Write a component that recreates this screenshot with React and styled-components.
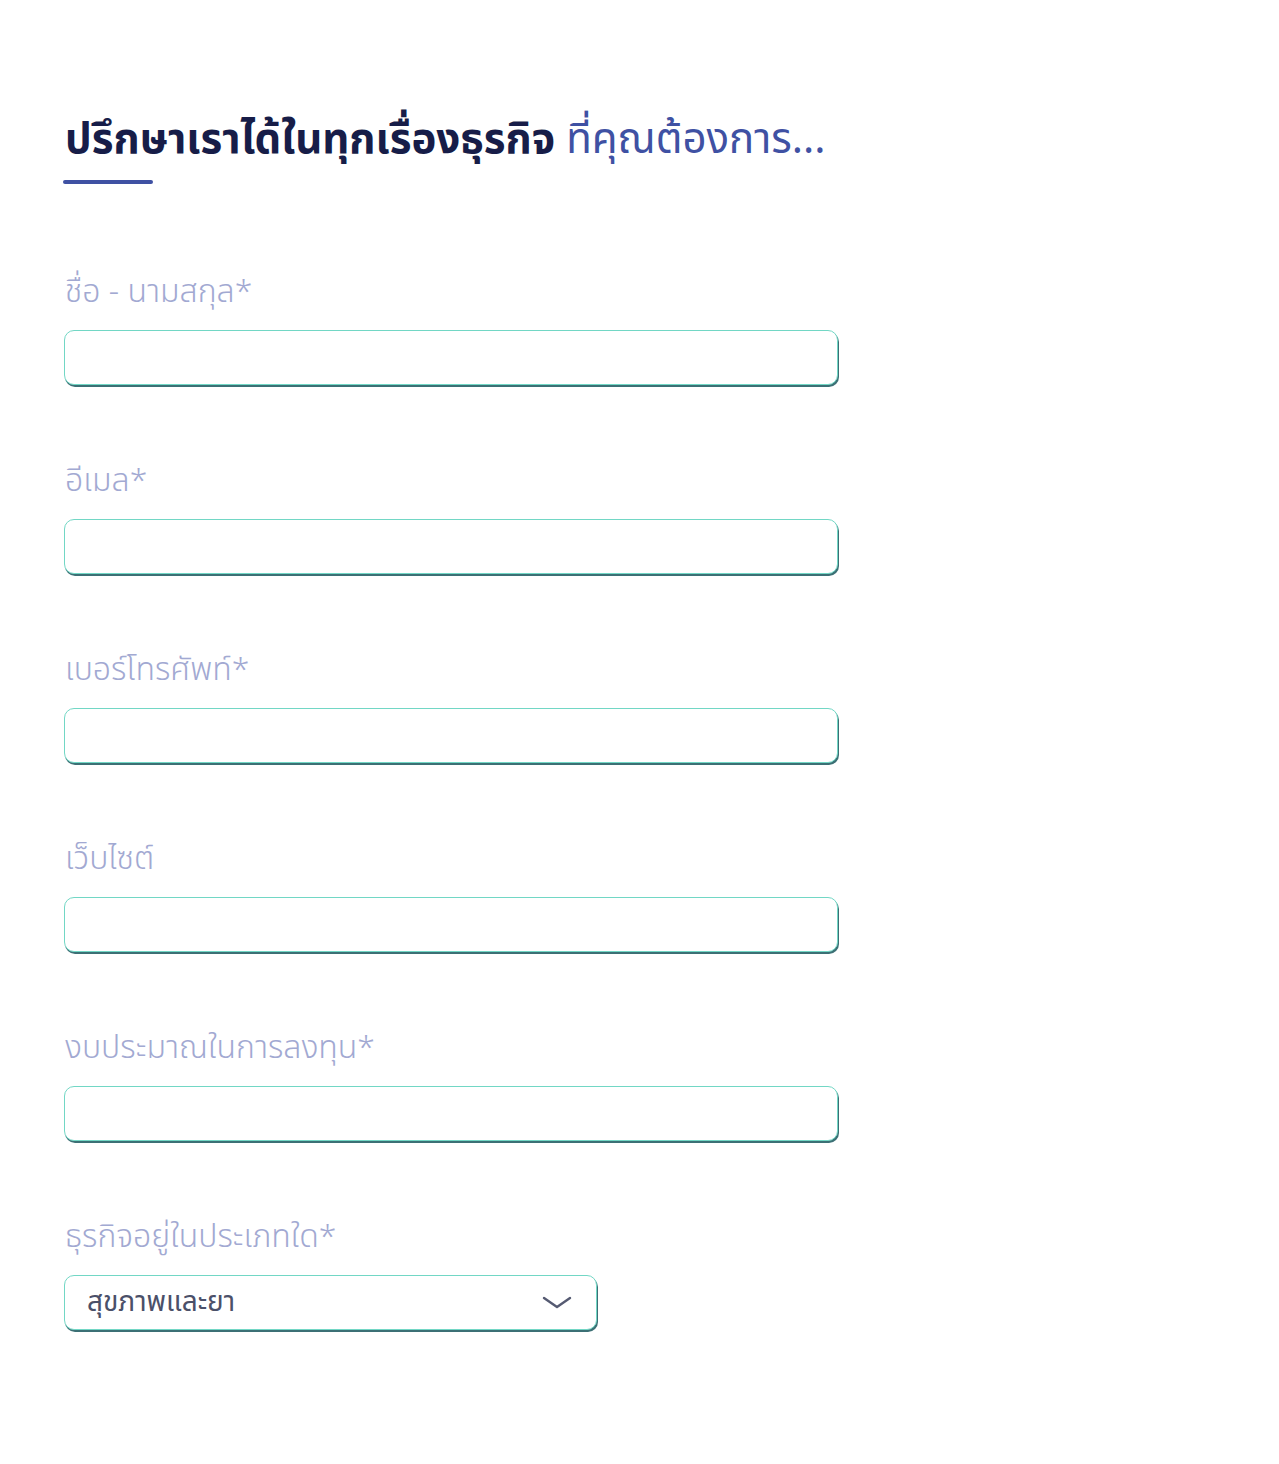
import styled, { createGlobalStyle } from "styled-components";

const GlobalStyle = createGlobalStyle`
  body {
    margin: 0;
    background: #ffffff;
    font-family: "Noto Sans Thai", "Noto Sans", "DejaVu Sans", sans-serif;
  }
`;

const Page = styled.div`
  padding: 115px 0 120px 64px;
`;

const Heading = styled.h2`
  margin: 0;
  font-size: 42px;
  line-height: 50px;
  font-weight: 700;
  color: #171d48;
  padding-left: 1px;
  span {
    font-weight: 400;
    color: #3f51a3;
  }
`;

const Underline = styled.div`
  width: 90px;
  height: 4px;
  border-radius: 2px;
  background: #3f51a3;
  margin: 15px 0 0 -1px;
`;

const Form = styled.form`
  margin-top: 86px;
  display: flex;
  flex-direction: column;
  gap: 74px;
  width: 774px;
`;

const Field = styled.div`
  display: flex;
  flex-direction: column;
  gap: 18px;
`;

const Label = styled.label`
  font-size: 32px;
  line-height: 40px;
  font-weight: 300;
  color: #a2a9d2;
  padding: 2px 0 0 1px;
`;

const Box = styled.div`
  box-sizing: border-box;
  height: 55px;
  width: ${(p) => p.$width || "100%"};
  border: 1px solid #72d7c5;
  border-radius: 10px;
  box-shadow: 1px 2px 0 #3c7075;
  background: #fff;
  display: flex;
  align-items: center;
`;

const Input = styled.input`
  border: 0;
  outline: 0;
  background: transparent;
  width: 100%;
  height: 100%;
  padding: 0 22px;
  font: inherit;
  font-size: 28px;
  color: #4a4f6a;
`;

const SelectText = styled.span`
  flex: 1;
  padding-left: 22px;
  font-size: 28px;
  color: #4b5069;
`;

const Chevron = styled.svg`
  width: 30px;
  height: 16px;
  margin-right: 24px;
`;

const fields = [
  "ชื่อ - นามสกุล*",
  "อีเมล*",
  "เบอร์โทรศัพท์*",
  "เว็บไซต์",
  "งบประมาณในการลงทุน*",
];

export default function App() {
  return (
    <>
      <GlobalStyle />
      <Page>
        <Heading>
          ปรึกษาเราได้ในทุกเรื่องธุรกิจ <span>ที่คุณต้องการ...</span>
        </Heading>
        <Underline />
        <Form>
          {fields.map((f) => (
            <Field key={f}>
              <Label>{f}</Label>
              <Box>
                <Input type="text" />
              </Box>
            </Field>
          ))}
          <Field>
            <Label>ธุรกิจอยู่ในประเภทใด*</Label>
            <Box $width="533px">
              <SelectText>สุขภาพและยา</SelectText>
              <Chevron viewBox="0 0 30 16" fill="none">
                <path d="M2 3l13 9 13-9" stroke="#555a72" strokeWidth="2.4" strokeLinecap="round" strokeLinejoin="round" />
              </Chevron>
            </Box>
          </Field>
        </Form>
      </Page>
    </>
  );
}
